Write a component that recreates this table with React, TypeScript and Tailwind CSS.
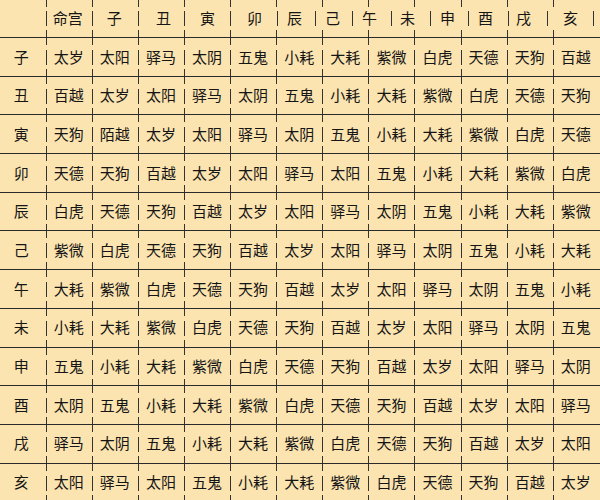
import React from 'react';

const branches = ['子', '丑', '寅', '卯', '辰', '己', '午', '未', '申', '酉', '戌', '亥'];

const rows: string[][] = [
  ['太岁', '太阳', '驿马', '太阴', '五鬼', '小耗', '大耗', '紫微', '白虎', '天德', '天狗', '百越'],
  ['百越', '太岁', '太阳', '驿马', '太阴', '五鬼', '小耗', '大耗', '紫微', '白虎', '天德', '天狗'],
  ['天狗', '陌越', '太岁', '太阳', '驿马', '太阴', '五鬼', '小耗', '大耗', '紫微', '白虎', '天德'],
  ['天德', '天狗', '百越', '太岁', '太阳', '驿马', '太阳', '五鬼', '小耗', '大耗', '紫微', '白虎'],
  ['白虎', '天德', '天狗', '百越', '太岁', '太阳', '驿马', '太阴', '五鬼', '小耗', '大耗', '紫微'],
  ['紫微', '白虎', '天德', '天狗', '百越', '太岁', '太阳', '驿马', '太阴', '五鬼', '小耗', '大耗'],
  ['大耗', '紫微', '白虎', '天德', '天狗', '百越', '太岁', '太阳', '驿马', '太阴', '五鬼', '小耗'],
  ['小耗', '大耗', '紫微', '白虎', '天德', '天狗', '百越', '太岁', '太阳', '驿马', '太阴', '五鬼'],
  ['五鬼', '小耗', '大耗', '紫微', '白虎', '天德', '天狗', '百越', '太岁', '太阳', '驿马', '太阴'],
  ['太阴', '五鬼', '小耗', '大耗', '紫微', '白虎', '天德', '天狗', '百越', '太岁', '太阳', '驿马'],
  ['驿马', '太阴', '五鬼', '小耗', '大耗', '紫微', '白虎', '天德', '天狗', '百越', '太岁', '太阳'],
  ['太阳', '驿马', '太阳', '五鬼', '小耗', '大耗', '紫微', '白虎', '天德', '天狗', '百越', '太岁'],
];

// header labels are squeezed into the 12 data columns, so they get their own widths
const header: { label: string; w: string; pl: string }[] = [
  { label: '命宫', w: 'w-[46px]', pl: 'pl-[7px]' },
  { label: '子', w: 'w-[46.3px]', pl: 'pl-[15px]' },
  { label: '丑', w: 'w-[46px]', pl: 'pl-[18px]' },
  { label: '寅', w: 'w-[46px]', pl: 'pl-[16px]' },
  { label: '卯', w: 'w-[47px]', pl: 'pl-[17px]' },
  { label: '辰', w: 'w-[38px]', pl: 'pl-[10px]' },
  { label: '己', w: 'w-[37px]', pl: 'pl-[10px]' },
  { label: '午', w: 'w-[39px]', pl: 'pl-[10px]' },
  { label: '未', w: 'w-[39px]', pl: 'pl-[9px]' },
  { label: '申', w: 'w-[38px]', pl: 'pl-[10px]' },
  { label: '酉', w: 'w-[40px]', pl: 'pl-[10px]' },
  { label: '戌', w: 'w-[39px]', pl: 'pl-[8px]' },
  { label: '亥', w: 'w-[46px]', pl: 'pl-[16px]' },
];

// dashed left rule of a body cell: tick through the row line, bar in the middle
const cellRule =
  'bg-[linear-gradient(to_bottom,#333_0_7px,transparent_7px_12px,#333_12px_27px,transparent_27px_31px,#333_31px)] bg-no-repeat bg-[length:1px_100%]';
const headTicks =
  'bg-[linear-gradient(to_bottom,#333_0_7px,transparent_7px_30px,#333_30px)] bg-no-repeat bg-[length:1px_100%]';
const headBar =
  'bg-[linear-gradient(to_bottom,transparent_0_11px,#333_11px_26px,transparent_26px)] bg-no-repeat bg-[length:1px_100%]';

const App: React.FC = () => {
  return (
    <div className="w-[600px] h-[500px] overflow-hidden bg-[#fce4b0] text-[#151515] text-[15px] font-['Noto_Sans_CJK_SC','Noto_Sans',sans-serif]">
      {/* Header row */}
      <div className="grid h-[37px]">
        <div className="col-start-1 row-start-1 flex">
          <div className="w-[45.7px] shrink-0" />
          {branches.map((b) => (
            <div key={b} className={`w-[46.1px] shrink-0 ${headTicks}`} />
          ))}
        </div>
        <div className="col-start-1 row-start-1 flex items-center">
          <div className="w-[45.7px] shrink-0" />
          {header.map((h) => (
            <div key={h.label} className={`${h.w} ${h.pl} h-full shrink-0 flex items-center ${headBar}`}>
              {h.label}
            </div>
          ))}
          <div className={`flex-1 h-full ${headBar}`} />
        </div>
      </div>

      {/* Body rows */}
      {rows.map((row, i) => (
        <div key={branches[i]} className="flex h-[38.7px] border-t border-[#2a2a2a]">
          <div className="w-[45.7px] shrink-0 flex items-center justify-center pr-[3px]">{branches[i]}</div>
          {row.map((v, j) => (
            <div key={j} className={`w-[46.1px] shrink-0 flex items-center justify-center ${cellRule}`}>
              {v}
            </div>
          ))}
        </div>
      ))}
    </div>
  );
};

export default App;
